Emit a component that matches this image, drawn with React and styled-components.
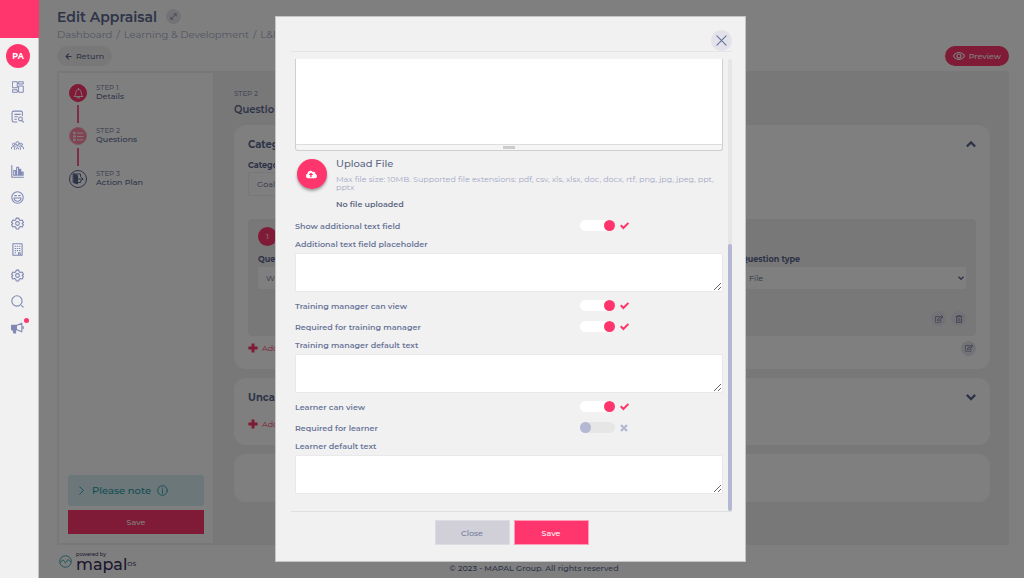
import React, { useState } from "react";

import styled, { createGlobalStyle } from "styled-components";
import {
    FaArrowLeft,
    FaCloudUploadAlt,
    FaRegEdit,
    FaRegTrashAlt,
} from "react-icons/fa";

const GlobalStyle = createGlobalStyle`
    * {
        box-sizing: border-box;
    }
    body {
        margin: 0;
        background: #ffffff;
        color: #5c6890;
        font-family: Montserrat, Inter, "Open Sans", sans-serif;
        font-size: 8px;
    }
    button, input, select, textarea {
        font-family: inherit;
        font-size: inherit;
        color: inherit;
        margin: 0;
    }
    button {
        border: none;
        padding: 0;
        cursor: pointer;
    }
    h1, h2, h3, p, ol {
        margin: 0;
        padding: 0;
    }
    svg {
        display: block;
        flex-shrink: 0;
    }
`;

const Layout = styled.div`
    display: flex;
    min-height: 100vh;
`;

const Sidebar = styled.nav`
    position: relative;
    z-index: 20;
    width: 39px;
    flex-shrink: 0;
    background: #f1f1f1;
    border-right: 1px solid #c4c4c4;
    display: flex;
    flex-direction: column;
    align-items: center;
`;

const Brand = styled.div`
    align-self: stretch;
    height: 38px;
    margin-right: -1px;
    background: #ff366d;
`;

const Avatar = styled.button`
    width: 24px;
    height: 24px;
    margin: 6px 2px 6px 0;
    border-radius: 50%;
    background: #ff366d;
    color: #ffffff;
    font-weight: 700;
`;

const NavGroup = styled.div`
    display: flex;
    flex-direction: column;
    gap: ${props => props.$loose ? "3px" : "0"};
    padding-right: 3px;
`;

const NavButton = styled.button`
    position: relative;
    width: 26px;
    height: 26px;
    display: flex;
    align-items: center;
    justify-content: center;
    background: none;
    color: #8088b3;
`;

const Dot = styled.span`
    position: absolute;
    top: 4px;
    right: 2px;
    width: 5px;
    height: 5px;
    border-radius: 50%;
    background: #ff366d;
`;

const Main = styled.main`
    flex: 1;
    min-width: 0;
    padding: 7px 15px 0 18px;
    display: flex;
    flex-direction: column;
`;

const TitleRow = styled.div`
    display: flex;
    align-items: center;
    gap: 9px;
    height: 19px;
`;

const Title = styled.h1`
    font-size: 14px;
    font-weight: 600;
    line-height: 18px;
`;

const RoundButton = styled.button`
    width: 15px;
    height: 15px;
    border-radius: 50%;
    background: #e6e6ee;
    color: #757c9c;
    display: flex;
    align-items: center;
    justify-content: center;
`;

const Breadcrumb = styled.nav`
    display: flex;
    gap: 4px;
    height: 18px;
    line-height: 18px;
    font-size: 10px;
    color: #a6abc6;
    white-space: nowrap;

    a {
        color: inherit;
        text-decoration: none;
    }
`;

const ActionRow = styled.div`
    display: flex;
    justify-content: space-between;
    margin: 2px 0 5px;
`;

const Pill = styled.button`
    height: 20px;
    padding: 0 8px;
    border-radius: 10px;
    display: flex;
    align-items: center;
    gap: 4px;
    font-weight: 500;
    background: ${props => props.$primary ? "#ff366d" : "#f1f1f1"};
    color: ${props => props.$primary ? "#ffffff" : "#5c6890"};
`;

const Panel = styled.div`
    flex: 1;
    display: flex;
    background: #f1f1f1;
    padding: 2px;
`;

const Steps = styled.aside`
    width: 154px;
    flex-shrink: 0;
    background: #ffffff;
    padding: 11px 9px 9px;
    display: flex;
    flex-direction: column;
`;

const StepList = styled.ol`
    list-style: none;
    flex: 1;
`;

const Step = styled.li`
    display: flex;
    gap: 8px;
    height: ${props => props.$last ? "20px" : "43px"};
`;

const StepMark = styled.div`
    width: 20px;
    display: flex;
    flex-direction: column;
    align-items: center;
    gap: 3px;
`;

const StepIcon = styled.div`
    width: 18px;
    height: 18px;
    border-radius: 50%;
    display: flex;
    align-items: center;
    justify-content: center;
    background: ${props => props.$state === "done" ? "#ff366d" : props.$state === "current" ? "#ff86a6" : "#ffffff"};
    border: 1px solid ${props => props.$state === "done" ? "#ff366d" : props.$state === "current" ? "#ffa9c0" : "#5c6890"};
    color: ${props => props.$state === "next" ? "#5c6890" : "#ffffff"};
`;

const StepLine = styled.div`
    width: 2px;
    height: 18px;
    background: #ff5f8a;
`;

const StepText = styled.div`
    line-height: 8px;
    font-weight: 500;
`;

const Overline = styled.div`
    font-size: 7px;
    line-height: 8px;
    font-weight: 500;
    color: #9197b5;
`;

const Note = styled.button`
    height: 31px;
    padding: 0 9px;
    border-radius: 3px;
    background: #d9eff2;
    color: #279aac;
    font-size: 10px;
    font-weight: 500;
    display: flex;
    align-items: center;
    gap: 6px;
`;

const BlockButton = styled.button`
    height: 24px;
    margin-top: 4px;
    background: #ff366d;
    color: #ffffff;
    font-weight: 500;
`;

const Content = styled.section`
    flex: 1;
    min-width: 0;
    padding: 17px 17px 0 21px;
`;

const SectionTitle = styled.h2`
    font-size: 10px;
    line-height: 12px;
    font-weight: 600;
    margin: 6px 0 9px;
`;

const Card = styled.div`
    background: #ffffff;
    border-radius: 12px;
    padding: 12px 14px 9px;
    margin-bottom: 9px;
    min-height: 48px;
`;

const CardHeader = styled.div`
    display: flex;
    align-items: center;
    justify-content: space-between;
    height: 14px;
    margin-bottom: 8px;
`;

const CardTitle = styled.h3`
    font-size: 10px;
    font-weight: 700;
`;

const IconButton = styled.button`
    background: none;
`;

const FieldLabel = styled.label`
    display: block;
    height: 12px;
    line-height: 12px;
    font-weight: 700;
`;

const TextInput = styled.input`
    display: block;
    width: 280px;
    height: 24px;
    margin: 1px 0 23px;
    padding: 0 8px;
    border: 1px solid #f1f1f1;
    border-radius: 2px;
    background: #ffffff;
`;

const Question = styled.div`
    background: #f1f1f1;
    border-radius: 4px;
    padding: 8px 10px 10px;
`;

const Number = styled.div`
    width: 19px;
    height: 19px;
    border-radius: 50%;
    background: #ff366d;
    color: #ffffff;
    text-align: center;
    line-height: 19px;
`;

const QuestionFields = styled.div`
    display: grid;
    grid-template-columns: 1fr 225px;
    gap: 20px;
    margin: 7px 0 22px;
`;

const SelectBox = styled.div`
    position: relative;
    margin-top: 2px;

    svg {
        position: absolute;
        right: 2px;
        top: 8px;
        pointer-events: none;
    }
`;

const Select = styled.select`
    appearance: none;
    display: block;
    width: 100%;
    height: 22px;
    padding: 0 8px;
    border: none;
    border-radius: 1px;
    background: #ffffff;
`;

const Tools = styled.div`
    display: flex;
    justify-content: flex-end;
    gap: 5px;
`;

const CardFooter = styled.div`
    display: flex;
    align-items: center;
    justify-content: space-between;
    height: 24px;
`;

const AddButton = styled.button`
    display: flex;
    align-items: center;
    gap: 4px;
    background: none;
    color: #ff366d;
    height: 24px;
`;

const Footer = styled.footer`
    display: grid;
    grid-template-columns: 1fr auto 1fr;
    align-items: center;
    height: 33px;
    padding-left: 2px;
    font-weight: 500;
`;

const Copyright = styled.p`
    padding-top: 12px;
`;

const Logo = styled.div`
    display: flex;
    align-items: center;
    gap: 4px;
    color: #3a2f5c;
`;

const LogoText = styled.div`
    display: flex;
    flex-direction: column;
    line-height: 6px;
    font-size: 5px;
`;

const Wordmark = styled.div`
    display: flex;
    font-size: 16px;
    line-height: 16px;

    small {
        font-size: 6px;
        line-height: 14px;
    }
`;

const Overlay = styled.div`
    position: fixed;
    inset: 0;
    z-index: 10;
    padding: 16px 3px 16px 0;
    background: rgba(0, 0, 0, 0.5);
    display: flex;
    justify-content: center;
`;

const Dialog = styled.div`
    width: 46vw;
    padding: 13px 13px 16px 15px;
    background: #f1f1f1;
    border: 1px solid #c4c4c4;
    display: flex;
    flex-direction: column;
`;

const DialogHeader = styled.div`
    display: flex;
    justify-content: flex-end;
    border-bottom: 1px solid #e4e4e4;
`;

const CloseIcon = styled.button`
    width: 21px;
    height: 21px;
    border-radius: 50%;
    background: #e3e2ea;
    color: #6a7599;
    display: flex;
    align-items: center;
    justify-content: center;
`;

const DialogBody = styled.div`
    flex: 1;
    min-height: 0;
    display: flex;
    gap: 5px;
    padding-top: 7px;
    border-bottom: 1px solid #dfdfe3;
`;

const DialogForm = styled.form`
    flex: 1;
    min-width: 0;
    padding-left: 4px;
    color: #6a7599;
`;

const ScrollTrack = styled.div`
    width: 4px;
    border-radius: 2px;
    background: #e6e6e6;
    display: flex;
    flex-direction: column;
    justify-content: flex-end;
`;

const ScrollThumb = styled.div`
    height: 59%;
    border-radius: 2px;
    background: #b4b8d3;
`;

const Editor = styled.div`
    border: 1px solid #cfcfcf;
    border-top: none;
    border-radius: 0 0 3px 3px;
    background: #f5f5f5;
`;

const EditorArea = styled.textarea`
    display: block;
    width: 100%;
    height: 86px;
    border: none;
    border-bottom: 1px solid #dddddd;
    background: #ffffff;
    resize: none;
`;

const Grip = styled.div`
    width: 12px;
    height: 3px;
    margin: 1px auto;
    background: #cccccc;
`;

const Upload = styled.div`
    display: flex;
    gap: 9px;
    padding: 6px 2px 5px;
`;

const UploadButton = styled.button`
    width: 30px;
    height: 30px;
    margin-top: 2px;
    flex-shrink: 0;
    border-radius: 50%;
    background: #ff366d;
    color: #ffffff;
    box-shadow: 0 2px 3px rgba(0, 0, 0, 0.35);
    display: flex;
    align-items: center;
    justify-content: center;
`;

const UploadTitle = styled.h3`
    font-size: 10px;
    line-height: 14px;
    font-weight: 500;
    color: #5c6782;
`;

const UploadHint = styled.p`
    margin: 4px 0 7px;
    line-height: 8px;
    color: #a4a8c6;
`;

const UploadStatus = styled.p`
    line-height: 12px;
    font-weight: 600;
    color: #5c6782;
`;

const ToggleRow = styled.div`
    display: grid;
    grid-template-columns: 2fr 1fr;
    align-items: center;
    height: 21px;
    font-weight: 600;
`;

const ToggleControl = styled.div`
    display: flex;
    align-items: center;
    gap: 5px;
    color: ${props => props.$on ? "#ff366d" : "#b4b8d3"};
`;

const Switch = styled.input`
    appearance: none;
    width: 35px;
    height: 11px;
    border-radius: 6px;
    background: #e6e6e6;
    display: flex;
    cursor: pointer;

    &::before {
        content: "";
        width: 11px;
        height: 11px;
        border-radius: 50%;
        background: #b4b8d3;
    }
    &:checked {
        background: #ffffff;
        justify-content: flex-end;
    }
    &:checked::before {
        background: #ff366d;
    }
`;

const AreaLabel = styled.label`
    display: block;
    height: 17px;
    line-height: 17px;
    font-weight: 600;
`;

const TextArea = styled.textarea`
    display: block;
    width: 100%;
    height: 39px;
    margin-bottom: 3px;
    border: 1px solid #e9e9ec;
    border-radius: 2px;
    background: #ffffff;
    resize: vertical;
`;

const DialogFooter = styled.div`
    display: flex;
    justify-content: center;
    gap: 4px;
    padding-top: 8px;
`;

const DialogButton = styled.button`
    width: 75px;
    height: 25px;
    font-weight: 500;
    background: ${props => props.$primary ? "#ff366d" : "#d1d0d8"};
    color: ${props => props.$primary ? "#ffffff" : "#737b9a"};
    border: 1px solid ${props => props.$primary ? "#ff9db8" : "#dddce3"};
`;

const Icon = ({ size = 12, width = 1.6, cap = "round", children }) => (
    <svg
        width={size}
        height={size}
        viewBox="0 0 24 24"
        fill="none"
        stroke="currentColor"
        strokeWidth={width}
        strokeLinecap={cap}
        strokeLinejoin={cap === "round" ? "round" : "miter"}
        aria-hidden="true"
    >
        {children}
    </svg>
);

const CheckIcon = () => (
    <Icon size={9} width={5.5} cap="butt">
        <path d="M2 11.500l7 7L22.500 5" />
    </Icon>
);

const CrossIcon = () => (
    <Icon size={8} width={7} cap="butt">
        <path d="M3 3l18 18M21 3L3 21" />
    </Icon>
);

const PlusIcon = () => (
    <Icon size={10} width={7} cap="butt">
        <path d="M12 1v22M1 12h22" />
    </Icon>
);

const ChevronIcon = ({ size = 10, up }) => (
    <Icon size={size} width={5.5} cap="butt">
        <path d={up ? "M2 18L12 8l10 10" : "M2 7l10 10L22 7"} />
    </Icon>
);

const GearIcon = () => (
    <Icon size={13} width={2}>
        <path d="M9.600 2h4.800l.8 3.200 2.200 1.300 3.200-1 2.400 4.200-2.400 2.300v.1l2.400 2.300-2.400 4.200-3.200-1-2.200 1.200-.8 3.200H9.600l-.8-3.200-2.200-1.200-3.200 1L1 14.400l2.400-2.300V12L1 9.700l2.400-4.200 3.200 1 2.200-1.300z" />
        <circle cx="12" cy="12" r="3.500" />
    </Icon>
);

const mainNav = [
    {
        name: "Dashboard",
        icon: (
            <Icon width={2}>
                <path d="M1.500 1.500h9v12h-9zM14 1.500h8.500v4.500H14zM14 10h8.500v12.500H14zM1.500 17.500h9v5h-9z" />
            </Icon>
        ),
    },
    {
        name: "Reports",
        icon: (
            <Icon size={13} width={2}>
                <path d="M11 22H5a3 3 0 0 1-3-3V5a3 3 0 0 1 3-3h13a3 3 0 0 1 3 3v5M7 8h10M7 12.500h5M7 17h3" />
                <circle cx="17.500" cy="16.500" r="3.500" />
                <path d="m20 19.500 3 3" />
            </Icon>
        ),
    },
    {
        name: "People",
        icon: (
            <Icon size={13} width={1.8}>
                <circle cx="12" cy="8" r="3.200" />
                <circle cx="5" cy="10" r="2.200" />
                <circle cx="19" cy="10" r="2.200" />
                <path d="M6.500 19v-2c0-3 2-4.500 5.500-4.500s5.500 1.500 5.500 4.500v2M1 18v-1.500C1 14.500 2.500 13.500 5.500 14M23 18v-1.500c0-2-1.500-3-4.500-2.500M9.500 19l2.500-4 2.500 4" />
            </Icon>
        ),
    },
];

const moreNav = [
    {
        name: "Statistics",
        icon: (
            <Icon size={13} width={2}>
                <path d="M1.500 1v21.500H23M5 10h3.500v9H5zM10.500 4H14v15h-3.500zM16 8h2v11h-2zM20 13h2.500v6H20z" />
            </Icon>
        ),
    },
    {
        name: "Engagement",
        icon: (
            <Icon size={13} width={2}>
                <circle cx="12" cy="12" r="10.500" />
                <path d="M5.500 13h13c-.5 4-3 6-6.500 6s-6-2-6.500-6zM7 8.500h3M14 8.500h3" />
            </Icon>
        ),
    },
    { name: "Settings", icon: <GearIcon /> },
    {
        name: "Company",
        icon: (
            <Icon size={13} width={2}>
                <path d="M3.500 1.500h17v21h-17zM14 22v-4h3v4" />
                <path d="M7.500 6h1M11.500 6h1M15.500 6h1M7.500 10h1M11.500 10h1M15.500 10h1M7.500 14h1M11.500 14h1M15.500 14h1M7.500 18h1" />
            </Icon>
        ),
    },
    { name: "Administration", icon: <GearIcon /> },
    {
        name: "Search",
        icon: (
            <Icon size={13} width={2}>
                <circle cx="11" cy="11" r="9.500" />
                <path d="m19.500 19.500 3 3" />
            </Icon>
        ),
    },
    {
        name: "News",
        dot: true,
        icon: (
            <Icon size={13} width={2}>
                <path d="M1 8h9v8H8.500v6H5l-1.500-6H1z" fill="currentColor" />
                <path d="M10 8.500 20 4v16l-10-4.500M22.500 10v4" />
            </Icon>
        ),
    },
];

const steps = [
    {
        label: "Details",
        state: "done",
        icon: (
            <Icon size={11} width={2}>
                <path d="M3 18c2-2 3-4 3-8 0-4 2.500-6.500 6-6.500s6 2.500 6 6.500c0 4 1 6 3 8zM12 1v2.500M9.500 21.500h5" />
            </Icon>
        ),
    },
    {
        label: "Questions",
        state: "current",
        icon: (
            <Icon size={11} width={2}>
                <path d="M2 3h3v3H2zM2 10.500h3v3H2zM2 18h3v3H2zM9.500 4.500H22M9.500 12H22M9.500 19.500H22" />
            </Icon>
        ),
    },
    {
        label: "Action Plan",
        state: "next",
        icon: (
            <Icon size={12} width={2}>
                <path d="M3 2l8 3v17l-8-3z" fill="currentColor" />
                <path d="M3 2h14v5M11 19h6v-3M13 12h9M19 9l3 3-3 3" />
            </Icon>
        ),
    },
];

function Toggle({ id, label, defaultOn }) {
    const [on, setOn] = useState(defaultOn);

    return (
        <ToggleRow>
            <label htmlFor={id}>{label}</label>
            <ToggleControl $on={on}>
                <Switch id={id} type="checkbox" checked={on} onChange={(e) => setOn(e.target.checked)} />
                {on ? <CheckIcon /> : <CrossIcon />}
            </ToggleControl>
        </ToggleRow>
    );
}

function Area({ id, label }) {
    return (
        <>
            <AreaLabel htmlFor={id}>{label}</AreaLabel>
            <TextArea id={id} />
        </>
    );
}

function QuestionDialog({ onClose }) {
    return (
        <Overlay>
            <Dialog role="dialog" aria-modal="true" aria-label="Edit question">
                <DialogHeader>
                    <CloseIcon aria-label="Close dialog" onClick={onClose}>
                        <Icon size={11} width={2.5}>
                            <path d="M2 2l20 20M22 2L2 22" />
                        </Icon>
                    </CloseIcon>
                </DialogHeader>
                <DialogBody>
                    <DialogForm id="question-form" onSubmit={(e) => e.preventDefault()}>
                        <Editor>
                            <EditorArea aria-label="Question text" />
                            <Grip />
                        </Editor>
                        <Upload>
                            <UploadButton type="button" aria-label="Upload file">
                                <FaCloudUploadAlt size={11} />
                            </UploadButton>
                            <div>
                                <UploadTitle>Upload File</UploadTitle>
                                <UploadHint>
                                    Max file size: 10MB. Supported file extensions: pdf, csv, xls, xlsx, doc, docx, rtf, png, jpg, jpeg, ppt, pptx
                                </UploadHint>
                                <UploadStatus>No file uploaded</UploadStatus>
                            </div>
                        </Upload>
                        <Toggle id="additional" label="Show additional text field" defaultOn={true} />
                        <Area id="additional-text" label="Additional text field placeholder" />
                        <Toggle id="manager-view" label="Training manager can view" defaultOn={true} />
                        <Toggle id="manager-required" label="Required for training manager" defaultOn={true} />
                        <Area id="manager-text" label="Training manager default text" />
                        <Toggle id="learner-view" label="Learner can view" defaultOn={true} />
                        <Toggle id="learner-required" label="Required for learner" defaultOn={false} />
                        <Area id="learner-text" label="Learner default text" />
                    </DialogForm>
                    <ScrollTrack>
                        <ScrollThumb />
                    </ScrollTrack>
                </DialogBody>
                <DialogFooter>
                    <DialogButton onClick={onClose}>Close</DialogButton>
                    <DialogButton $primary type="submit" form="question-form">Save</DialogButton>
                </DialogFooter>
            </Dialog>
        </Overlay>
    );
}

function NavItem({ item }) {
    return (
        <NavButton aria-label={item.name}>
            {item.icon}
            {item.dot && <Dot />}
        </NavButton>
    );
}

function App() {

    const [dialogOpen, setDialogOpen] = useState(true);

    const openDialog = () => setDialogOpen(true);

    return (
        <Layout>
            <GlobalStyle />
            <Sidebar>
                <Brand />
                <Avatar>PA</Avatar>
                <NavGroup $loose>
                    {mainNav.map((item) => <NavItem key={item.name} item={item} />)}
                </NavGroup>
                <NavGroup>
                    {moreNav.map((item) => <NavItem key={item.name} item={item} />)}
                </NavGroup>
            </Sidebar>

            <Main>
                <TitleRow>
                    <Title>Edit Appraisal</Title>
                    <RoundButton aria-label="Expand">
                        <Icon size={7} width={2.5}>
                            <path d="M3 21 21 3M14 3h7v7M3 14v7h7" />
                        </Icon>
                    </RoundButton>
                </TitleRow>
                <Breadcrumb>
                    <a href="#dashboard">Dashboard</a>
                    <span>/</span>
                    <a href="#learning">Learning &amp; Development</a>
                    <span>/</span>
                    <a href="#appraisals">L&amp;D</a>
                </Breadcrumb>
                <ActionRow>
                    <Pill>
                        <FaArrowLeft size={7} />
                        Return
                    </Pill>
                    <Pill $primary>
                        <Icon size={12} width={2.2}>
                            <path d="M1 12c3-5 7-7 11-7s8 2 11 7c-3 5-7 7-11 7s-8-2-11-7z" />
                            <circle cx="12" cy="12" r="4" />
                        </Icon>
                        Preview
                    </Pill>
                </ActionRow>

                <Panel>
                    <Steps>
                        <StepList>
                            {steps.map((step, i) => (
                                <Step key={step.label} $last={i === steps.length - 1}>
                                    <StepMark>
                                        <StepIcon $state={step.state}>{step.icon}</StepIcon>
                                        {i < steps.length - 1 && <StepLine />}
                                    </StepMark>
                                    <StepText>
                                        <Overline>STEP {i + 1}</Overline>
                                        {step.label}
                                    </StepText>
                                </Step>
                            ))}
                        </StepList>
                        <Note>
                            <Icon size={9} width={2.5}>
                                <path d="m7 2 10 10L7 22" />
                            </Icon>
                            Please note
                            <Icon size={11} width={2}>
                                <circle cx="12" cy="12" r="10.500" />
                                <path d="M12 10.500V18M12 6.500v.5" />
                            </Icon>
                        </Note>
                        <BlockButton>Save</BlockButton>
                    </Steps>

                    <Content>
                        <Overline>STEP 2</Overline>
                        <SectionTitle>Questions</SectionTitle>

                        <Card>
                            <CardHeader>
                                <CardTitle>Category</CardTitle>
                                <IconButton aria-label="Collapse category"><ChevronIcon up /></IconButton>
                            </CardHeader>
                            <FieldLabel htmlFor="category-name">Category name</FieldLabel>
                            <TextInput id="category-name" defaultValue="Goals" />
                            <Question>
                                <Number>1</Number>
                                <QuestionFields>
                                    <div>
                                        <FieldLabel htmlFor="question">Question</FieldLabel>
                                        <SelectBox>
                                            <Select id="question"><option>What</option></Select>
                                        </SelectBox>
                                    </div>
                                    <div>
                                        <FieldLabel htmlFor="question-type">Question type</FieldLabel>
                                        <SelectBox>
                                            <Select id="question-type"><option>File</option></Select>
                                            <ChevronIcon size={6} />
                                        </SelectBox>
                                    </div>
                                </QuestionFields>
                                <Tools>
                                    <RoundButton aria-label="Edit question" onClick={openDialog}><FaRegEdit size={8} /></RoundButton>
                                    <RoundButton aria-label="Delete question"><FaRegTrashAlt size={8} /></RoundButton>
                                </Tools>
                            </Question>
                            <CardFooter>
                                <AddButton><PlusIcon />Add question</AddButton>
                                <RoundButton aria-label="Edit category"><FaRegEdit size={8} /></RoundButton>
                            </CardFooter>
                        </Card>

                        <Card>
                            <CardHeader>
                                <CardTitle>Uncategorised</CardTitle>
                                <IconButton aria-label="Expand category"><ChevronIcon /></IconButton>
                            </CardHeader>
                            <AddButton><PlusIcon />Add question</AddButton>
                        </Card>

                        <Card />
                    </Content>
                </Panel>

                <Footer>
                    <Logo>
                        <svg width="13" height="13" viewBox="0 0 26 26" fill="none" stroke="#35aeb4" strokeWidth="2" aria-hidden="true">
                            <circle cx="13" cy="13" r="11.500" />
                            <path d="M2 15c3 0 3-5 6-5s3 6 5 6 3-7 5-7 3 5 6 5" />
                        </svg>
                        <LogoText>
                            powered by
                            <Wordmark>mapal<small>OS</small></Wordmark>
                        </LogoText>
                    </Logo>
                    <Copyright>© 2023 - MAPAL Group. All rights reserved</Copyright>
                </Footer>
            </Main>

            {dialogOpen && <QuestionDialog onClose={() => setDialogOpen(false)} />}
        </Layout>
    );
}

export default App;
